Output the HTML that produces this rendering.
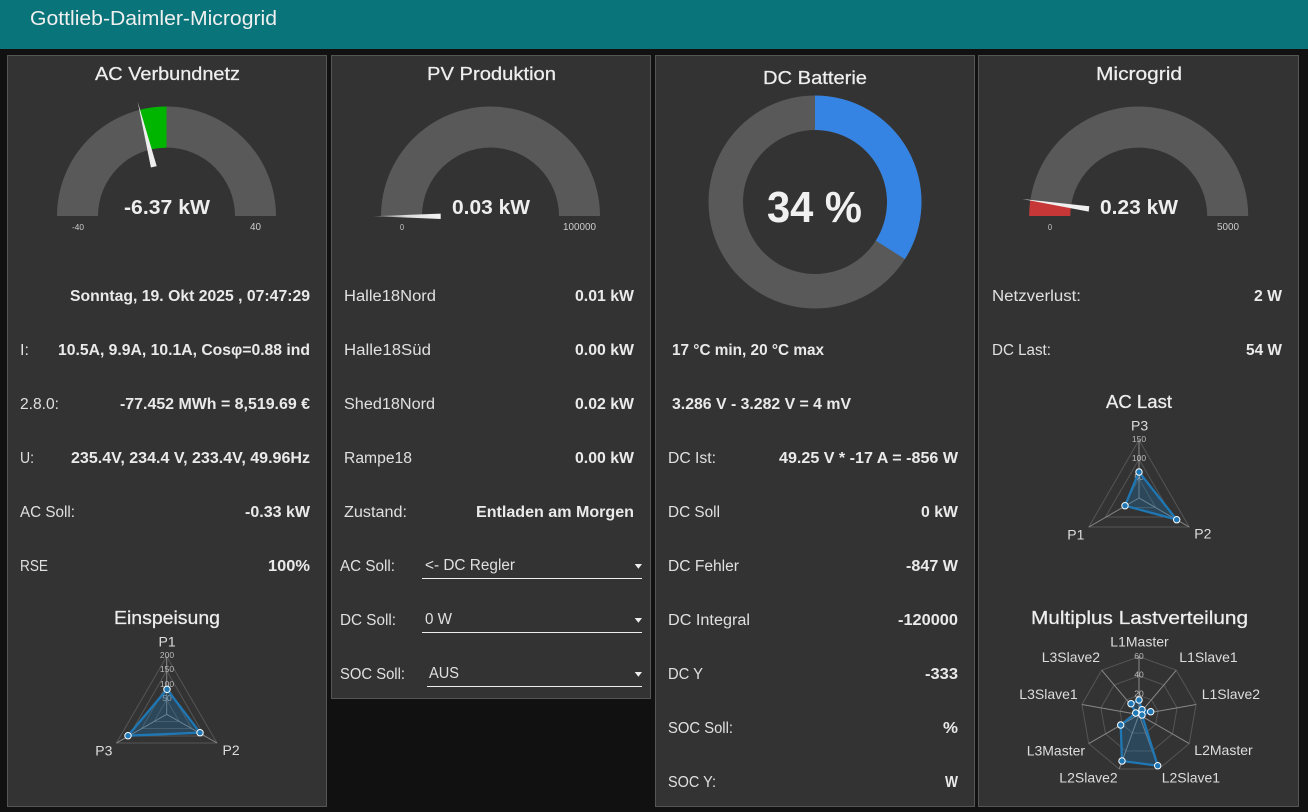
<!DOCTYPE html>
<html lang="de"><head><meta charset="utf-8"><title>Gottlieb-Daimler-Microgrid</title>
<style>
html,body{margin:0;padding:0;background:#111;width:1308px;height:812px;overflow:hidden}
svg{display:block;position:absolute;left:0;top:0}
text{font-family:"Liberation Sans",sans-serif}
.t{font-size:18.5px;fill:#eee;stroke:#eee;stroke-width:.25px}
.l{font-size:15.5px;fill:#e0e0e0}
.v{font-size:15.5px;font-weight:bold;fill:#eaeaea}
.g{font-size:20px;font-weight:bold;fill:#eee}
.s{font-size:10.5px;fill:#ccc}
.xs{font-size:8px;fill:#ccc}
.r{font-size:14px;fill:#ddd}
.tick{font-size:8.5px;fill:#bbb;text-anchor:middle}
.grid{fill:none;stroke:#555;stroke-width:1}
.spoke{stroke:#888;stroke-width:1}
.area{fill:rgba(31,119,180,.3);stroke:#1f77b4;stroke-width:2.3;stroke-linejoin:round}
.dot{fill:#1f77b4;stroke:#fff;stroke-width:1}
.ln{stroke:#eee;stroke-width:1}
</style></head><body>
<svg width="1308" height="812" viewBox="0 0 1308 812" xmlns="http://www.w3.org/2000/svg">
<defs><linearGradient id="fade" x1="0" x2="1" y1="0" y2="0"><stop offset="0" stop-color="#666"/><stop offset=".5" stop-color="#ddd"/><stop offset="1" stop-color="#f4f4f4"/></linearGradient></defs>
<rect width="1308" height="812" fill="#111"/>
<rect width="1308" height="49" fill="#097479"/>
<text x="30" y="25" font-size="20" fill="#f0f0f0" textLength="247" lengthAdjust="spacingAndGlyphs">Gottlieb-Daimler-Microgrid</text>

<g fill="#333" stroke="#555" stroke-width="1">
<rect x="7.5" y="55.5" width="319" height="751"/>
<rect x="331.5" y="55.5" width="319" height="643"/>
<rect x="655.5" y="55.5" width="319" height="751"/>
<rect x="978.5" y="55.5" width="320" height="751"/>
</g>

<!-- titles -->
<text class="t" x="95" y="80" textLength="145" lengthAdjust="spacingAndGlyphs">AC Verbundnetz</text>
<text class="t" x="427" y="80" textLength="129" lengthAdjust="spacingAndGlyphs">PV Produktion</text>
<text class="t" x="763" y="84" textLength="104" lengthAdjust="spacingAndGlyphs">DC Batterie</text>
<text class="t" x="1096" y="80" textLength="86" lengthAdjust="spacingAndGlyphs">Microgrid</text>
<text class="t" x="1106" y="408" textLength="66" lengthAdjust="spacingAndGlyphs">AC Last</text>
<text class="t" x="114" y="624" textLength="106" lengthAdjust="spacingAndGlyphs">Einspeisung</text>
<text class="t" x="1031" y="624" textLength="217" lengthAdjust="spacingAndGlyphs">Multiplus Lastverteilung</text>

<!-- gauge 1 -->
<path d="M57,216 A109.5,109.5 0 0 1 276,216 L235,216 A68.5,68.5 0 0 0 98,216 Z" fill="#595959"/>
<path d="M139.5,109.9 A109.5,109.5 0 0 1 166.5,106.5 L166.5,147.7 A68.5,68.5 0 0 0 149.6,149.7 Z" fill="#00b500"/>
<polygon points="137.7,101.7 156.7,166.1 150.9,167.5" fill="#eee"/>
<text class="g" x="124" y="214" textLength="86" lengthAdjust="spacingAndGlyphs">-6.37 kW</text>
<text class="xs" x="72" y="230" textLength="12" lengthAdjust="spacingAndGlyphs">-40</text>
<text class="s" x="250" y="230" textLength="11" lengthAdjust="spacingAndGlyphs">40</text>

<!-- gauge 2 -->
<path d="M381,216 A109.5,109.5 0 0 1 600,216 L559,216 A68.5,68.5 0 0 0 422,216 Z" fill="#595959"/>
<polygon points="373,216.2 440.7,213.6 440.7,219" fill="url(#fade)"/>
<text class="g" x="452" y="214" textLength="78" lengthAdjust="spacingAndGlyphs">0.03 kW</text>
<text class="xs" x="400" y="230" textLength="4" lengthAdjust="spacingAndGlyphs">0</text>
<text class="s" x="563" y="230" textLength="33" lengthAdjust="spacingAndGlyphs">100000</text>

<!-- gauge 4 -->
<path d="M1029.2,216 A109.5,109.5 0 0 1 1248.2,216 L1207.2,216 A68.5,68.5 0 0 0 1070.2,216 Z" fill="#595959"/>
<path d="M1029.2,216 A109.5,109.5 0 0 1 1030.3,200.2 L1071,206.2 A68.5,68.5 0 0 0 1070.2,216 Z" fill="#c83737"/>
<polygon points="1022.3,199 1089.3,206.3 1088.7,211.6" fill="#f0f0f0"/>
<text class="g" x="1100" y="214" textLength="78" lengthAdjust="spacingAndGlyphs">0.23 kW</text>
<text class="xs" x="1048" y="230" textLength="4" lengthAdjust="spacingAndGlyphs">0</text>
<text class="s" x="1217" y="230" textLength="22" lengthAdjust="spacingAndGlyphs">5000</text>

<!-- donut -->
<path d="M815,95.5 A106.5,106.5 0 1 1 814.99,95.5 Z M815,130 A72,72 0 1 0 815.01,130 Z" fill="#595959" fill-rule="evenodd"/>
<path d="M815,95.5 A106.5,106.5 0 0 1 904.9,259.1 L875.8,240.6 A72,72 0 0 0 815,130 Z" fill="#3584e4"/>
<text x="767" y="222" font-size="44" font-weight="bold" fill="#f0f0f0" textLength="95" lengthAdjust="spacingAndGlyphs">34 %</text>

<!-- card 1 rows -->
<text class="v" x="70" y="301" textLength="240" lengthAdjust="spacingAndGlyphs">Sonntag, 19. Okt 2025 , 07:47:29</text>
<text class="l" x="20" y="355" textLength="9" lengthAdjust="spacingAndGlyphs">I:</text>
<text class="v" x="58" y="355" textLength="252" lengthAdjust="spacingAndGlyphs">10.5A, 9.9A, 10.1A, Cosφ=0.88 ind</text>
<text class="l" x="20" y="409" textLength="39" lengthAdjust="spacingAndGlyphs">2.8.0:</text>
<text class="v" x="120" y="409" textLength="190" lengthAdjust="spacingAndGlyphs">-77.452 MWh = 8,519.69 €</text>
<text class="l" x="20" y="463" textLength="14" lengthAdjust="spacingAndGlyphs">U:</text>
<text class="v" x="71" y="463" textLength="239" lengthAdjust="spacingAndGlyphs">235.4V, 234.4 V, 233.4V, 49.96Hz</text>
<text class="l" x="20" y="517" textLength="55" lengthAdjust="spacingAndGlyphs">AC Soll:</text>
<text class="v" x="245" y="517" textLength="65" lengthAdjust="spacingAndGlyphs">-0.33 kW</text>
<text class="l" x="20" y="571" textLength="28" lengthAdjust="spacingAndGlyphs">RSE</text>
<text class="v" x="268" y="571" textLength="42" lengthAdjust="spacingAndGlyphs">100%</text>

<!-- card 2 rows -->
<text class="l" x="344" y="301" textLength="92" lengthAdjust="spacingAndGlyphs">Halle18Nord</text>
<text class="v" x="575" y="301" textLength="59" lengthAdjust="spacingAndGlyphs">0.01 kW</text>
<text class="l" x="344" y="355" textLength="87" lengthAdjust="spacingAndGlyphs">Halle18Süd</text>
<text class="v" x="575" y="355" textLength="59" lengthAdjust="spacingAndGlyphs">0.00 kW</text>
<text class="l" x="344" y="409" textLength="91" lengthAdjust="spacingAndGlyphs">Shed18Nord</text>
<text class="v" x="575" y="409" textLength="59" lengthAdjust="spacingAndGlyphs">0.02 kW</text>
<text class="l" x="344" y="463" textLength="68" lengthAdjust="spacingAndGlyphs">Rampe18</text>
<text class="v" x="575" y="463" textLength="59" lengthAdjust="spacingAndGlyphs">0.00 kW</text>
<text class="l" x="344" y="517" textLength="63" lengthAdjust="spacingAndGlyphs">Zustand:</text>
<text class="v" x="476" y="517" textLength="158" lengthAdjust="spacingAndGlyphs">Entladen am Morgen</text>

<!-- selects -->
<text class="l" x="340" y="571" textLength="55" lengthAdjust="spacingAndGlyphs">AC Soll:</text>
<text class="l" x="425" y="570" textLength="90" lengthAdjust="spacingAndGlyphs">&lt;- DC Regler</text>
<line class="ln" x1="422" x2="642" y1="578.5" y2="578.5"/>
<polygon points="634.7,564 642,564 638.4,568.7" fill="#eee"/>
<text class="l" x="340" y="625" textLength="56" lengthAdjust="spacingAndGlyphs">DC Soll:</text>
<text class="l" x="425" y="624" textLength="27" lengthAdjust="spacingAndGlyphs">0 W</text>
<line class="ln" x1="422" x2="642" y1="632.5" y2="632.5"/>
<polygon points="634.7,618 642,618 638.4,622.7" fill="#eee"/>
<text class="l" x="340" y="679" textLength="65" lengthAdjust="spacingAndGlyphs">SOC Soll:</text>
<text class="l" x="429" y="678" textLength="30" lengthAdjust="spacingAndGlyphs">AUS</text>
<line class="ln" x1="427" x2="642" y1="686.5" y2="686.5"/>
<polygon points="634.7,672 642,672 638.4,676.7" fill="#eee"/>

<!-- card 3 rows -->
<text class="v" x="672" y="355" textLength="152" lengthAdjust="spacingAndGlyphs">17 °C min, 20 °C max</text>
<text class="v" x="672" y="409" textLength="179" lengthAdjust="spacingAndGlyphs">3.286 V - 3.282 V = 4 mV</text>
<text class="l" x="668" y="463" textLength="48" lengthAdjust="spacingAndGlyphs">DC Ist:</text>
<text class="v" x="779" y="463" textLength="179" lengthAdjust="spacingAndGlyphs">49.25 V * -17 A = -856 W</text>
<text class="l" x="668" y="517" textLength="52" lengthAdjust="spacingAndGlyphs">DC Soll</text>
<text class="v" x="921" y="517" textLength="37" lengthAdjust="spacingAndGlyphs">0 kW</text>
<text class="l" x="668" y="571" textLength="71" lengthAdjust="spacingAndGlyphs">DC Fehler</text>
<text class="v" x="906" y="571" textLength="52" lengthAdjust="spacingAndGlyphs">-847 W</text>
<text class="l" x="668" y="625" textLength="82" lengthAdjust="spacingAndGlyphs">DC Integral</text>
<text class="v" x="898" y="625" textLength="60" lengthAdjust="spacingAndGlyphs">-120000</text>
<text class="l" x="668" y="679" textLength="35" lengthAdjust="spacingAndGlyphs">DC Y</text>
<text class="v" x="925" y="679" textLength="33" lengthAdjust="spacingAndGlyphs">-333</text>
<text class="l" x="668" y="733" textLength="65" lengthAdjust="spacingAndGlyphs">SOC Soll:</text>
<text class="v" x="943" y="733" textLength="15" lengthAdjust="spacingAndGlyphs">%</text>
<text class="l" x="668" y="787" textLength="48" lengthAdjust="spacingAndGlyphs">SOC Y:</text>
<text class="v" x="945" y="787" textLength="13" lengthAdjust="spacingAndGlyphs">W</text>

<!-- card 4 rows -->
<text class="l" x="992" y="301" textLength="89" lengthAdjust="spacingAndGlyphs">Netzverlust:</text>
<text class="v" x="1254" y="301" textLength="28" lengthAdjust="spacingAndGlyphs">2 W</text>
<text class="l" x="992" y="355" textLength="59" lengthAdjust="spacingAndGlyphs">DC Last:</text>
<text class="v" x="1246" y="355" textLength="36" lengthAdjust="spacingAndGlyphs">54 W</text>

<!-- radar Einspeisung -->
<polygon class="grid" points="166.7,656.5 217,743 116.4,743"/>
<polygon class="grid" points="166.7,670.8 204.4,736 129,736"/>
<polygon class="grid" points="166.7,685.2 191.8,728.5 141.6,728.5"/>
<polygon class="grid" points="166.7,699.8 179.3,721.5 154.1,721.5"/>
<line class="spoke" x1="166.7" y1="714.3" x2="166.7" y2="656.5"/>
<line class="spoke" x1="166.7" y1="714.3" x2="217" y2="743"/>
<line class="spoke" x1="166.7" y1="714.3" x2="116.4" y2="743"/>
<text class="tick" x="167" y="658">200</text><text class="tick" x="167" y="672">150</text><text class="tick" x="167" y="687">100</text><text class="tick" x="167" y="701">50</text>
<polygon class="area" points="167,689.3 200,732.7 128,735.7"/>
<circle class="dot" cx="167" cy="689.3" r="3.2"/><circle class="dot" cx="200" cy="732.7" r="3.2"/><circle class="dot" cx="128" cy="735.7" r="3.2"/>
<text class="r" x="158.5" y="646.5">P1</text><text class="r" x="222.5" y="755">P2</text><text class="r" x="95.3" y="755.5">P3</text>

<!-- radar AC Last -->
<polygon class="grid" points="1139,440 1189.2,527 1088.8,527"/>
<polygon class="grid" points="1139,459.3 1172.5,517 1105.5,517"/>
<polygon class="grid" points="1139,478.7 1155.7,507.5 1122.3,507.5"/>
<line class="spoke" x1="1139" y1="498" x2="1139" y2="440"/>
<line class="spoke" x1="1139" y1="498" x2="1189.2" y2="527"/>
<line class="spoke" x1="1139" y1="498" x2="1088.8" y2="527"/>
<text class="tick" x="1139" y="442">150</text><text class="tick" x="1139" y="461">100</text><text class="tick" x="1139" y="480">50</text>
<polygon class="area" points="1139,472 1176.7,519.7 1125,505.7"/>
<circle class="dot" cx="1139" cy="472" r="3.2"/><circle class="dot" cx="1176.7" cy="519.7" r="3.2"/><circle class="dot" cx="1125" cy="505.7" r="3.2"/>
<text class="r" x="1131" y="430.5">P3</text><text class="r" x="1194.3" y="538.5">P2</text><text class="r" x="1067.3" y="539.5">P1</text>

<!-- radar Multiplus -->
<polygon class="grid" points="1139,656.6 1176.3,670.2 1196.1,704.5 1189.2,743.6 1158.8,769 1119.2,769 1088.8,743.6 1081.9,704.5 1101.7,670.2"/>
<polygon class="grid" points="1139,675.9 1163.9,685 1177.1,707.9 1172.5,733.9 1152.2,751 1125.8,751 1105.5,733.9 1100.9,707.9 1114.1,685"/>
<polygon class="grid" points="1139,695.3 1151.4,699.8 1158,711.2 1155.7,724.3 1145.6,733 1132.4,733 1122.3,724.3 1120,711.2 1126.6,699.8"/>
<g class="spoke">
<line x1="1139" y1="714.6" x2="1139" y2="656.6"/><line x1="1139" y1="714.6" x2="1176.3" y2="670.2"/><line x1="1139" y1="714.6" x2="1196.1" y2="704.5"/><line x1="1139" y1="714.6" x2="1189.2" y2="743.6"/><line x1="1139" y1="714.6" x2="1158.8" y2="769"/><line x1="1139" y1="714.6" x2="1119.2" y2="769"/><line x1="1139" y1="714.6" x2="1088.8" y2="743.6"/><line x1="1139" y1="714.6" x2="1081.9" y2="704.5"/><line x1="1139" y1="714.6" x2="1101.7" y2="670.2"/>
</g>
<text class="tick" x="1139" y="659">60</text><text class="tick" x="1139" y="677.5">40</text><text class="tick" x="1139" y="696.5">20</text>
<polygon class="area" points="1139,700 1142,709.7 1150.7,711.7 1142,715 1157.7,765.7 1122,761 1120.7,725 1135.7,713 1131,703.7"/>
<g class="dot">
<circle cx="1139" cy="700" r="3.2"/><circle cx="1142" cy="709.7" r="3.2"/><circle cx="1150.7" cy="711.7" r="3.2"/><circle cx="1142" cy="715" r="3.2"/><circle cx="1157.7" cy="765.7" r="3.2"/><circle cx="1122" cy="761" r="3.2"/><circle cx="1120.7" cy="725" r="3.2"/><circle cx="1135.7" cy="713" r="3.2"/><circle cx="1131" cy="703.7" r="3.2"/>
</g>
<text class="r" x="1110.3" y="646.5">L1Master</text>
<text class="r" x="1179.3" y="662">L1Slave1</text>
<text class="r" x="1201.7" y="699">L1Slave2</text>
<text class="r" x="1194.3" y="755">L2Master</text>
<text class="r" x="1161.7" y="782.5">L2Slave1</text>
<text class="r" x="1059.3" y="782.5">L2Slave2</text>
<text class="r" x="1026.7" y="755.5">L3Master</text>
<text class="r" x="1019.3" y="699">L3Slave1</text>
<text class="r" x="1041.7" y="662">L3Slave2</text>
</svg>
</body></html>
